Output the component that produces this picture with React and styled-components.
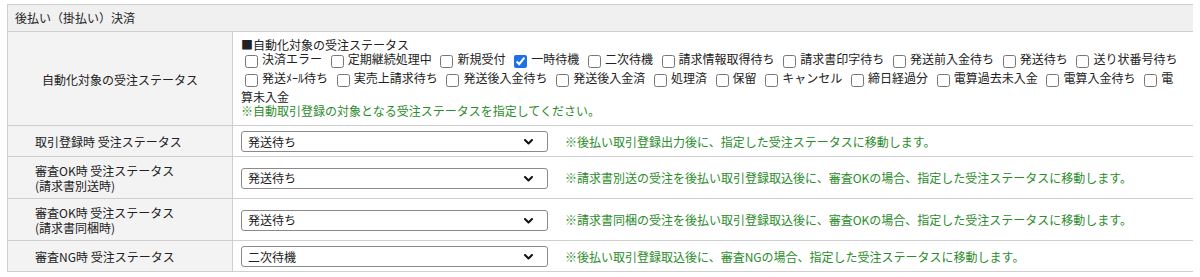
import styled, { createGlobalStyle } from "styled-components"

const GlobalStyle = createGlobalStyle`
  body {
    margin: 4px 7px;
    background: #fff;
    color: #222;
    font-family: "Noto Sans CJK JP", "Noto Sans", sans-serif;
    font-size: 12px;
  }
`

const Table = styled.table`
  width: 1187px;
  border-collapse: collapse;
  table-layout: fixed;

  th,
  td {
    border: 1px solid #cfcfcf;
  }
`

const LabelCol = styled.col`
  width: 225px;
`

const HeadCell = styled.th`
  height: 26px;
  padding: 0 7px;
  background: #f0f0f0;
  font-weight: normal;
  text-align: left;
  line-height: 14px;
`

const LabelCell = styled.th`
  padding: 6px 0 5px ${(p) => (p.$center ? "0" : "27px")};
  background: #f3f3f3;
  font-weight: normal;
  text-align: ${(p) => (p.$center ? "center" : "left")};
  vertical-align: middle;
  line-height: 15px;
`

const ValueCell = styled.td`
  padding: ${(p) => (p.$tall ? "6px 11px 7px 8px" : "5px 11px 4px 8px")};
  background: #fff;
  line-height: 14px;
  vertical-align: middle;
`

const Options = styled.div`
  line-height: 14px;
`

const Option = styled.label`
  margin-right: 2px;
`

const Check = styled.input`
  width: 13px;
  height: 13px;
  margin: 3px 4px;
  vertical-align: -4px;
  accent-color: #1f6fe8;
`

const Note = styled.div`
  color: #2b8c2b;
`

const Inline = styled.div`
  display: flex;
  align-items: center;
  gap: 17px;
`

const SelectBox = styled.div`
  position: relative;
  width: 307px;
  flex: none;

  svg {
    position: absolute;
    top: 8px;
    right: 15px;
    pointer-events: none;
  }
`

const Select = styled.select`
  appearance: none;
  display: block;
  width: 100%;
  height: 21px;
  padding: 0 28px 0 6px;
  border: 1px solid #8a8a8a;
  border-radius: 3px;
  background: #fff;
  color: #222;
  font: inherit;
  font-size: 12px;
`

const NoteText = styled.span`
  color: #2b8c2b;
  white-space: nowrap;
`

const statuses = [
  ["決済エラー", false],
  ["定期継続処理中", false],
  ["新規受付", false],
  ["一時待機", true],
  ["二次待機", false],
  ["請求情報取得待ち", false],
  ["請求書印字待ち", false],
  ["発送前入金待ち", false],
  ["発送待ち", false],
  ["送り状番号待ち", false],
  ["発送ﾒｰﾙ待ち", false],
  ["実売上請求待ち", false],
  ["発送後入金待ち", false],
  ["発送後入金済", false],
  ["処理済", false],
  ["保留", false],
  ["キャンセル", false],
  ["締日経過分", false],
  ["電算過去未入金", false],
  ["電算入金待ち", false],
  ["電算未入金", false],
]

function StatusSelect({ value, note }) {
  return (
    <Inline>
      <SelectBox>
        <Select defaultValue={value}>
          {statuses.map(([name]) => (
            <option key={name}>{name}</option>
          ))}
        </Select>
        <svg width="9" height="6" viewBox="0 0 9 6">
          <polyline
            points="1,1 4.5,4.5 8,1"
            fill="none"
            stroke="#111"
            strokeWidth="2"
            strokeLinecap="round"
            strokeLinejoin="round"
          />
        </svg>
      </SelectBox>
      <NoteText>{note}</NoteText>
    </Inline>
  )
}

const rows = [
  {
    label: ["取引登録時 受注ステータス"],
    value: "発送待ち",
    note: "※後払い取引登録出力後に、指定した受注ステータスに移動します。",
  },
  {
    label: ["審査OK時 受注ステータス", "(請求書別送時)"],
    value: "発送待ち",
    note: "※請求書別送の受注を後払い取引登録取込後に、審査OKの場合、指定した受注ステータスに移動します。",
  },
  {
    label: ["審査OK時 受注ステータス", "(請求書同梱時)"],
    value: "発送待ち",
    note: "※請求書同梱の受注を後払い取引登録取込後に、審査OKの場合、指定した受注ステータスに移動します。",
  },
  {
    label: ["審査NG時 受注ステータス"],
    value: "二次待機",
    note: "※後払い取引登録取込後に、審査NGの場合、指定した受注ステータスに移動します。",
  },
]

export default function App() {
  return (
    <>
      <GlobalStyle />
      <Table>
        <colgroup>
          <LabelCol />
          <col />
        </colgroup>
        <tbody>
          <tr>
            <HeadCell colSpan={2}>後払い（掛払い）決済</HeadCell>
          </tr>
          <tr>
            <LabelCell $center>自動化対象の受注ステータス</LabelCell>
            <ValueCell $tall>
              <div>■自動化対象の受注ステータス</div>
              <Options>
                {statuses.map(([name, checked]) => (
                  <span key={name}>
                    <Option>
                      <Check type="checkbox" defaultChecked={checked} />
                      {name}
                    </Option>{" "}
                  </span>
                ))}
              </Options>
              <Note>※自動取引登録の対象となる受注ステータスを指定してください。</Note>
            </ValueCell>
          </tr>
          {rows.map((row) => (
            <tr key={row.note}>
              <LabelCell>
                {row.label.map((line) => (
                  <div key={line}>{line}</div>
                ))}
              </LabelCell>
              <ValueCell>
                <StatusSelect value={row.value} note={row.note} />
              </ValueCell>
            </tr>
          ))}
        </tbody>
      </Table>
    </>
  )
}
